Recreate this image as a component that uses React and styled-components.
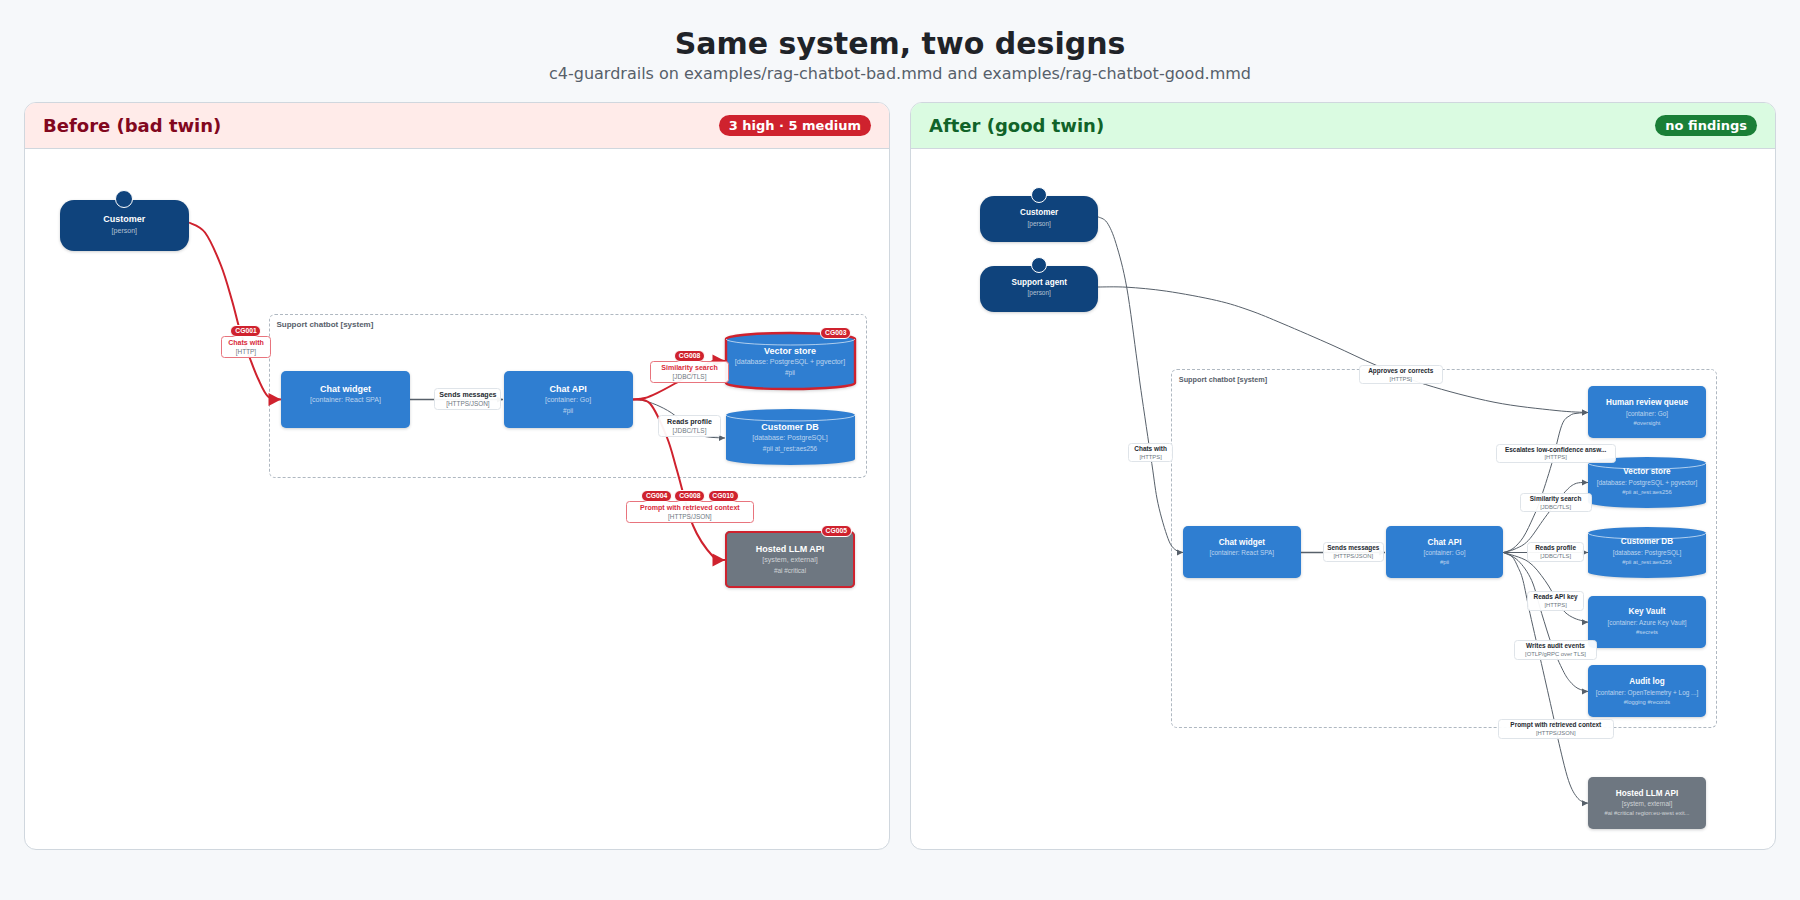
import React from "react";
import styled, { createGlobalStyle } from "styled-components";

const RED = "#cf222e";
const GREY = "#57606a";

const GlobalStyle = createGlobalStyle`
  html, body {
    margin: 0;
    background: #f6f8fa;
  }
  body {
    font-family: "DejaVu Sans", sans-serif;
    color: #1f2328;
  }
`;

const Page = styled.div`
  box-sizing: border-box;
  width: 1800px;
  height: 900px;
  padding: 25px 24px 24px;
  overflow: hidden;
`;

const Title = styled.h1`
  margin: 0;
  font-size: 30px;
  line-height: 38px;
  font-weight: 700;
  text-align: center;
`;

const Subtitle = styled.p`
  margin: 0.5px 0 18.5px;
  font-size: 16px;
  line-height: 20px;
  text-align: center;
  color: #57606a;
`;

const Panels = styled.div`
  display: grid;
  grid-template-columns: 866px 866px;
  gap: 20px;
`;

const Panel = styled.section`
  display: flex;
  flex-direction: column;
  box-sizing: border-box;
  height: 748px;
  background: #fff;
  border: 1px solid #d0d7de;
  border-radius: 12px;
  overflow: hidden;
`;

const PanelHead = styled.header`
  display: flex;
  align-items: center;
  justify-content: space-between;
  box-sizing: border-box;
  height: 46px;
  padding: 0 18px;
  background: ${(p) => (p.$good ? "#dafbe1" : "#ffebe9")};
  border-bottom: 1px solid #d0d7de;
`;

const PanelTitle = styled.h2`
  margin: 0;
  font-size: 18px;
  font-weight: 700;
  color: ${(p) => (p.$good ? "#116329" : "#82071e")};
`;

const Verdict = styled.span`
  padding: 0 10px;
  font-size: 13px;
  font-weight: 700;
  line-height: 21px;
  color: #fff;
  border-radius: 11px;
  background: ${(p) => (p.$good ? "#1a7f37" : RED)};
`;

const Canvas = styled.div`
  position: relative;
  flex: 1;
  font-family: "Liberation Sans", Arial, sans-serif;
  --title: ${(p) => (p.$compact ? "8.2px" : "9px")};
  --sub: ${(p) => (p.$compact ? "6.44px" : "7.07px")};
  --tag: ${(p) => (p.$compact ? "5.85px" : "6.43px")};
  --label: ${(p) => (p.$compact ? "6.44px" : "7.07px")};
  --label-sub: ${(p) => (p.$compact ? "5.85px" : "6.43px")};
  --group: ${(p) => (p.$compact ? "7.3px" : "8px")};
  --title-lh: ${(p) => (p.$compact ? "11.4px" : "12px")};
  --sub-lh: ${(p) => (p.$compact ? "10px" : "10.6px")};
  --tag-lh: ${(p) => (p.$compact ? "8.6px" : "10.2px")};
  --node-pad: ${(p) => (p.$compact ? "10.8px" : "12px")};
  --db-pad: ${(p) => (p.$compact ? "9.6px" : "12px")};
  --person-pad: ${(p) => (p.$compact ? "10.5px" : "13px")};
  --head: ${(p) => (p.$compact ? "16.6px" : "18px")};
  --label-pad: ${(p) => (p.$compact ? "1.2px" : "2px")};
  --label-title-lh: ${(p) => (p.$compact ? "7.6px" : "8px")};
  --label-sub-lh: ${(p) => (p.$compact ? "9.8px" : "10px")};
`;

const Boundary = styled.div`
  position: absolute;
  left: ${(p) => p.$x}px;
  top: ${(p) => p.$y}px;
  width: ${(p) => p.$w}px;
  height: ${(p) => p.$h}px;
  box-sizing: border-box;
  padding: 4px 6.5px;
  border: 1.4px dashed #afb8c1;
  border-radius: 6px;
  font-size: var(--group);
  font-weight: 700;
  line-height: 11px;
  color: #57606a;
`;

const EdgeLayer = styled.svg`
  position: absolute;
  left: 0;
  top: 0;
  width: 100%;
  height: 100%;
`;

const nodeFill = { person: "#0f437c", container: "#2f7ed1", external: "#6e7781" };

const Node = styled.div`
  position: absolute;
  left: ${(p) => p.$x}px;
  top: ${(p) => p.$y}px;
  width: ${(p) => p.$w}px;
  height: ${(p) => p.$h}px;
  box-sizing: border-box;
  text-align: center;
  white-space: nowrap;
  color: #fff;
  padding-top: ${(p) =>
    p.$kind === "db" ? "var(--db-pad)" : p.$kind === "person" ? "var(--person-pad)" : "var(--node-pad)"};
  background: ${(p) => nodeFill[p.$kind] || "transparent"};
  border-radius: ${(p) => (p.$kind === "person" ? "14px" : "5px")};
  box-shadow: ${(p) => (p.$kind === "db" ? "none" : "0 1px 3px rgba(31, 35, 40, 0.22)")};
  outline: ${(p) => (p.$flagged && p.$kind !== "db" ? `2.4px solid ${RED}` : "none")};
  outline-offset: -2.4px;
`;

const NodeTitle = styled.div`
  position: relative;
  font-size: var(--title);
  font-weight: 700;
  line-height: var(--title-lh);
`;

const NodeSub = styled.div`
  position: relative;
  margin-top: ${(p) => (p.$loose ? "1px" : "0")};
  font-size: var(--sub);
  line-height: var(--sub-lh);
  color: rgba(255, 255, 255, 0.68);
`;

const NodeTag = styled.div`
  position: relative;
  font-size: var(--tag);
  line-height: var(--tag-lh);
  color: rgba(255, 255, 255, 0.68);
`;

const Head = styled.span`
  position: absolute;
  left: 50%;
  top: calc(var(--head) * -0.56);
  box-sizing: border-box;
  width: var(--head);
  height: var(--head);
  margin-left: calc(var(--head) / -2);
  background: #0f437c;
  border: 1px solid #fff;
  border-radius: 50%;
`;

const DbShape = styled.svg`
  position: absolute;
  left: 0;
  top: 0;
  width: 100%;
  height: 100%;
  overflow: visible;
  filter: drop-shadow(0 1px 1.5px rgba(31, 35, 40, 0.2));
`;

const Finding = styled.span`
  box-sizing: border-box;
  display: inline-block;
  width: 31px;
  height: 12px;
  font-size: 6.75px;
  font-weight: 700;
  line-height: 10px;
  text-align: center;
  color: #fff;
  background: ${RED};
  border: 1px solid #fff;
  border-radius: 6px;
`;

const NodeFinding = styled(Finding)`
  position: absolute;
  right: 3.2px;
  top: -5.6px;
`;

const Label = styled.div`
  position: absolute;
  left: ${(p) => p.$x}px;
  top: ${(p) => p.$y}px;
  width: ${(p) => p.$w}px;
  height: ${(p) => p.$h}px;
  box-sizing: border-box;
  padding-top: var(--label-pad);
  text-align: center;
  white-space: nowrap;
  background: rgba(255, 255, 255, 0.94);
  border: 1px solid ${(p) => (p.$flagged ? "#e8747d" : "#dfe4e9")};
  border-radius: 3.5px;
`;

const LabelTitle = styled.div`
  font-size: var(--label);
  font-weight: 700;
  line-height: var(--label-title-lh);
  color: ${(p) => (p.$flagged ? "#d92a3a" : "#24292f")};
`;

const LabelSub = styled.div`
  font-size: var(--label-sub);
  line-height: var(--label-sub-lh);
  color: #6e7781;
`;

const FindingRow = styled.div`
  position: absolute;
  left: 0;
  right: 0;
  bottom: calc(100% + 0.6px);
  display: flex;
  justify-content: center;
  gap: 2.2px;
`;

// catmull-rom through the points, so an edge can be read off the picture
const spline = (pts) => {
  let d = `M${pts[0][0]} ${pts[0][1]}`;
  for (let i = 0; i < pts.length - 1; i++) {
    const a = pts[Math.max(i - 1, 0)];
    const b = pts[i];
    const c = pts[i + 1];
    const e = pts[Math.min(i + 2, pts.length - 1)];
    const c1 = [b[0] + (c[0] - a[0]) / 6, b[1] + (c[1] - a[1]) / 6];
    const c2 = [c[0] - (e[0] - b[0]) / 6, c[1] - (e[1] - b[1]) / 6];
    d += ` C${c1[0]} ${c1[1]} ${c2[0]} ${c2[1]} ${c[0]} ${c[1]}`;
  }
  return d;
};

const bad = {
  origin: [25, 149],
  boundary: { x: 269, y: 313.5, w: 598, h: 164 },
  nodes: [
    { kind: "person", x: 59.7, y: 200, w: 129.3, h: 51, title: "Customer", sub: "[person]", loose: true },
    { kind: "container", x: 281, y: 371, w: 129, h: 56.5, title: "Chat widget", sub: "[container: React SPA]" },
    { kind: "container", x: 503.6, y: 371, w: 129, h: 56.5, title: "Chat API", sub: "[container: Go]", tag: "#pii" },
    {
      kind: "db", x: 725.5, y: 333, w: 129, h: 56, title: "Vector store",
      sub: "[database: PostgreSQL + pgvector]", tag: "#pii", flagged: true, finding: "CG003",
    },
    {
      kind: "db", x: 725.5, y: 409, w: 129, h: 56, title: "Customer DB",
      sub: "[database: PostgreSQL]", tag: "#pii at_rest:aes256",
    },
    {
      kind: "external", x: 725, y: 531, w: 130, h: 57, title: "Hosted LLM API",
      sub: "[system, external]", tag: "#ai #critical", flagged: true, finding: "CG005",
    },
  ],
  edges: [
    { flagged: true, pts: [[189, 222], [205, 232], [221, 265], [232, 300], [240, 330], [250, 358], [258, 378], [268, 396], [281, 399]] },
    { pts: [[410, 399], [503, 399]], width: 1.6 },
    { flagged: true, pts: [[632.6, 399], [645, 397.5], [657, 392.6], [675, 383], [695, 371], [713, 360.5], [725, 360.5]] },
    { pts: [[632.6, 399], [645, 400.5], [660, 406], [675, 415], [690, 430], [705, 436], [725, 437.5]] },
    { flagged: true, pts: [[632.6, 399], [650, 403], [667, 437], [677, 470], [693, 525], [713, 556], [725, 559.5]] },
  ],
  labels: [
    { x: 220.7, y: 336.3, w: 50.6, h: 21.4, title: "Chats with", sub: "[HTTP]", findings: ["CG001"] },
    { x: 434.4, y: 388.3, w: 67, h: 21.4, title: "Sends messages", sub: "[HTTPS/JSON]" },
    { x: 650.3, y: 361.3, w: 78.4, h: 21.4, title: "Similarity search", sub: "[JDBC/TLS]", findings: ["CG008"] },
    { x: 658.3, y: 415.3, w: 62.4, h: 21.4, title: "Reads profile", sub: "[JDBC/TLS]" },
    {
      x: 625.7, y: 501.3, w: 128.3, h: 21.4, title: "Prompt with retrieved context",
      sub: "[HTTPS/JSON]", findings: ["CG004", "CG008", "CG010"],
    },
  ],
};

const good = {
  compact: true,
  origin: [911, 149],
  boundary: { x: 1171.3, y: 369, w: 546, h: 358.5 },
  nodes: [
    { kind: "person", x: 980.4, y: 196, w: 117.6, h: 46.3, title: "Customer", sub: "[person]", loose: true },
    { kind: "person", x: 980.4, y: 266, w: 117.6, h: 46, title: "Support agent", sub: "[person]" },
    { kind: "container", x: 1183, y: 526, w: 117.7, h: 51.7, title: "Chat widget", sub: "[container: React SPA]" },
    { kind: "container", x: 1385.7, y: 526, w: 117.7, h: 51.7, title: "Chat API", sub: "[container: Go]", tag: "#pii" },
    { kind: "container", x: 1588, y: 386.3, w: 118, h: 52, title: "Human review queue", sub: "[container: Go]", tag: "#oversight" },
    {
      kind: "db", x: 1588, y: 456.7, w: 118, h: 51, title: "Vector store",
      sub: "[database: PostgreSQL + pgvector]", tag: "#pii at_rest:aes256",
    },
    {
      kind: "db", x: 1588, y: 526.7, w: 118, h: 51, title: "Customer DB",
      sub: "[database: PostgreSQL]", tag: "#pii at_rest:aes256",
    },
    { kind: "container", x: 1588, y: 595.5, w: 118, h: 52, title: "Key Vault", sub: "[container: Azure Key Vault]", tag: "#secrets" },
    { kind: "container", x: 1588, y: 665.3, w: 118, h: 52, title: "Audit log", sub: "[container: OpenTelemetry + Log ...]", tag: "#logging #records" },
    {
      kind: "external", x: 1588, y: 777, w: 118, h: 52, title: "Hosted LLM API",
      sub: "[system, external]", tag: "#ai #critical region:eu-west exit...",
    },
  ],
  edges: [
    { pts: [[1098, 216.3], [1107, 222], [1116, 243], [1126.7, 286.7], [1137, 360], [1141, 390], [1151.8, 463], [1158, 503], [1168, 538], [1175, 549], [1183, 552]] },
    { pts: [[1098, 286.5], [1126.7, 286.7], [1166.7, 290.7], [1216.7, 300], [1250, 310], [1283, 323.3], [1333, 345], [1376.7, 365], [1425.5, 384], [1494, 401.7], [1556, 410], [1588, 412]] },
    { pts: [[1300.7, 552], [1385, 552]], width: 1.4 },
    { pts: [[1503.4, 552], [1513, 548], [1523.3, 536.7], [1533.3, 516.7], [1540, 500], [1551.7, 463.3], [1561.7, 425], [1570, 415], [1577, 412.8], [1588, 412]] },
    { pts: [[1503.4, 552], [1515, 548.5], [1528.3, 540], [1545, 517], [1563.3, 493.3], [1575, 483.3], [1588, 482]] },
    { pts: [[1503.4, 552], [1588, 552]], width: 1.2 },
    { pts: [[1503.4, 552], [1528, 561], [1545, 580], [1558, 601.7], [1565, 611.7], [1575, 618], [1588, 621.7]] },
    { pts: [[1503.4, 552], [1518, 560], [1531.7, 580], [1541.7, 613], [1552, 645], [1563, 670], [1570, 681], [1578, 688], [1588, 691]] },
    { pts: [[1503.4, 552], [1512, 556], [1518, 566.7], [1523, 580], [1530, 613], [1543, 670], [1554, 719], [1558, 738.7], [1568.5, 780], [1578, 798], [1588, 802.7]] },
  ],
  labels: [
    { x: 1127.8, y: 443.3, w: 45.6, h: 19.2, title: "Chats with", sub: "[HTTPS]" },
    { x: 1359, y: 365.3, w: 83.5, h: 19.2, title: "Approves or corrects", sub: "[HTTPS]" },
    { x: 1495.5, y: 443.7, w: 120.3, h: 19.6, title: "Escalates low-confidence answ...", sub: "[HTTPS]" },
    { x: 1519.6, y: 493.3, w: 72, h: 19, title: "Similarity search", sub: "[JDBC/TLS]" },
    { x: 1322.6, y: 542.3, w: 61.4, h: 19.4, title: "Sends messages", sub: "[HTTPS/JSON]" },
    { x: 1527, y: 542.3, w: 57.2, h: 19.4, title: "Reads profile", sub: "[JDBC/TLS]" },
    { x: 1527, y: 591.3, w: 57.2, h: 19.4, title: "Reads API key", sub: "[HTTPS]" },
    { x: 1514, y: 640.3, w: 83, h: 19.4, title: "Writes audit events", sub: "[OTLP/gRPC over TLS]" },
    { x: 1497.6, y: 719.3, w: 116.4, h: 19.4, title: "Prompt with retrieved context", sub: "[HTTPS/JSON]" },
  ],
};

const Cylinder = ({ w, h, flagged }) => {
  const ry = 6;
  const rx = w / 2;
  return (
    <DbShape viewBox={`0 0 ${w} ${h}`}>
      <path
        d={`M0 ${ry} a${rx} ${ry} 0 0 1 ${w} 0 v${h - ry * 2} a${rx} ${ry} 0 0 1 ${-w} 0 z`}
        fill="#2f7ed1"
        stroke={flagged ? RED : "none"}
        strokeWidth={flagged ? 2.4 : 0}
      />
      <path d={`M0 ${ry} a${rx} ${ry} 0 0 0 ${w} 0`} fill="none" stroke="#cfe2f5" strokeWidth="0.8" />
    </DbShape>
  );
};

const Edge = ({ edge }) => {
  const color = edge.flagged ? RED : GREY;
  const [tx, ty] = edge.pts[edge.pts.length - 1];
  const len = edge.flagged ? 12.5 : 6;
  const half = edge.flagged ? 6.5 : 3;
  const width = edge.width || (edge.flagged ? 2 : 1);
  return (
    <g>
      <path d={spline(edge.pts)} fill="none" stroke={color} strokeWidth={width} />
      <polygon points={`${tx - len},${ty - half} ${tx},${ty} ${tx - len},${ty + half}`} fill={color} />
    </g>
  );
};

const Diagram = ({ data }) => {
  const [ox, oy] = data.origin;
  const { boundary } = data;
  return (
    <Canvas $compact={data.compact}>
      <Boundary $x={boundary.x - ox} $y={boundary.y - oy} $w={boundary.w} $h={boundary.h}>
        Support chatbot [system]
      </Boundary>
      <EdgeLayer viewBox={`${ox} ${oy} 864 699`}>
        {data.edges.map((edge, i) => (
          <Edge key={i} edge={edge} />
        ))}
      </EdgeLayer>
      {data.nodes.map((n) => (
        <Node key={n.title + n.y} $kind={n.kind} $flagged={n.flagged} $x={n.x - ox} $y={n.y - oy} $w={n.w} $h={n.h}>
          {n.kind === "db" && <Cylinder w={n.w} h={n.h} flagged={n.flagged} />}
          {n.kind === "person" && <Head />}
          <NodeTitle>{n.title}</NodeTitle>
          <NodeSub $loose={n.loose}>{n.sub}</NodeSub>
          {n.tag && <NodeTag>{n.tag}</NodeTag>}
          {n.finding && <NodeFinding>{n.finding}</NodeFinding>}
        </Node>
      ))}
      {data.labels.map((l) => (
        <Label key={l.title} $flagged={!!l.findings} $x={l.x - ox} $y={l.y - oy} $w={l.w} $h={l.h}>
          {l.findings && (
            <FindingRow>
              {l.findings.map((f) => (
                <Finding key={f}>{f}</Finding>
              ))}
            </FindingRow>
          )}
          <LabelTitle $flagged={!!l.findings}>{l.title}</LabelTitle>
          <LabelSub>{l.sub}</LabelSub>
        </Label>
      ))}
    </Canvas>
  );
};

export default function App() {
  return (
    <Page>
      <GlobalStyle />
      <Title>Same system, two designs</Title>
      <Subtitle>c4-guardrails on examples/rag-chatbot-bad.mmd and examples/rag-chatbot-good.mmd</Subtitle>
      <Panels>
        <Panel>
          <PanelHead>
            <PanelTitle>Before (bad twin)</PanelTitle>
            <Verdict>3 high · 5 medium</Verdict>
          </PanelHead>
          <Diagram data={bad} />
        </Panel>
        <Panel>
          <PanelHead $good>
            <PanelTitle $good>After (good twin)</PanelTitle>
            <Verdict $good>no findings</Verdict>
          </PanelHead>
          <Diagram data={good} />
        </Panel>
      </Panels>
    </Page>
  );
}
